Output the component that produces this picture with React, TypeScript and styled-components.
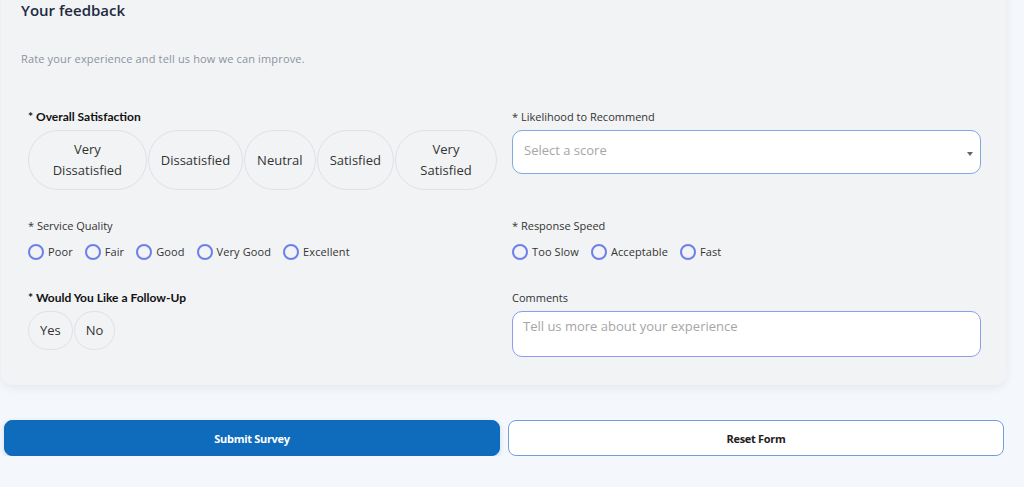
import React from 'react';
import styled, { createGlobalStyle } from 'styled-components';

const GlobalStyle = createGlobalStyle`
  html, body {
    margin: 0;
    padding: 0;
    background: #f4f7fb;
    font-family: 'Open Sans', 'Noto Sans', sans-serif;
    overflow: hidden;
  }
  * {
    box-sizing: border-box;
  }
`;

const satisfactionOptions = ['Very Dissatisfied', 'Dissatisfied', 'Neutral', 'Satisfied', 'Very Satisfied'];
const qualityOptions = ['Poor', 'Fair', 'Good', 'Very Good', 'Excellent'];
const speedOptions = ['Too Slow', 'Acceptable', 'Fast'];

export default function App() {
  return (
    <>
      <GlobalStyle />
      <Page>
        <Card>
          <Title>Your feedback</Title>
          <Subtitle>Rate your experience and tell us how we can improve.</Subtitle>
          <Fields>
            <Field>
              <StrongLabel>* Overall Satisfaction</StrongLabel>
              <PillGroup>
                {satisfactionOptions.map((opt) => (
                  <Pill key={opt} type="button">
                    {opt}
                  </Pill>
                ))}
              </PillGroup>
            </Field>
            <Field>
              <Label>* Likelihood to Recommend</Label>
              <SelectBox>
                <Placeholder>Select a score</Placeholder>
                <Caret />
              </SelectBox>
            </Field>

            <Field>
              <Label>* Service Quality</Label>
              <RadioRow>
                {qualityOptions.map((opt) => (
                  <RadioItem key={opt}>
                    <RadioInput type="radio" name="quality" />
                    {opt}
                  </RadioItem>
                ))}
              </RadioRow>
            </Field>
            <Field>
              <Label>* Response Speed</Label>
              <RadioRow>
                {speedOptions.map((opt) => (
                  <RadioItem key={opt}>
                    <RadioInput type="radio" name="speed" />
                    {opt}
                  </RadioItem>
                ))}
              </RadioRow>
            </Field>

            <Field>
              <StrongLabel>* Would You Like a Follow-Up</StrongLabel>
              <PillGroup>
                <Pill type="button" $compact>
                  Yes
                </Pill>
                <Pill type="button" $compact>
                  No
                </Pill>
              </PillGroup>
            </Field>
            <Field>
              <Label>Comments</Label>
              <TextArea placeholder="Tell us more about your experience" />
            </Field>
          </Fields>
        </Card>
        <Actions>
          <ActionButton type="button" $primary>
            Submit Survey
          </ActionButton>
          <ActionButton type="button">Reset Form</ActionButton>
        </Actions>
      </Page>
    </>
  );
}

const Page = styled.div`
  width: 1000px;
  margin-left: 4px;
`;

const Card = styled.div`
  margin: -18px -2px 0 -3px;
  padding: 18px 25px 28px 16px;
  background: #f2f3f5;
  border-radius: 12px;
  box-shadow: 0 3px 10px rgba(30, 50, 90, 0.07);
`;

const Title = styled.h2`
  margin: 0 0 0 4px;
  font-size: 15px;
  font-weight: 600;
  line-height: 20px;
  color: #1d2a3f;
`;

const Subtitle = styled.p`
  margin: 31px 0 0 4px;
  font-size: 11px;
  line-height: 16px;
  letter-spacing: 0.15px;
  color: #8b93a1;
`;

const Fields = styled.div`
  display: grid;
  grid-template-columns: 1fr 1fr;
  column-gap: 15px;
  row-gap: 28px;
  margin: 42px 0 0 11px;
`;

const Field = styled.div`
  display: flex;
  flex-direction: column;
  min-width: 0;
`;

const StrongLabel = styled.div`
  font-family: 'Lato', sans-serif;
  font-size: 12px;
  font-weight: 700;
  line-height: 15px;
  color: #111;
  margin-bottom: 6px;
`;

const Label = styled.div`
  font-size: 11px;
  line-height: 15px;
  color: #333;
  margin-bottom: 6px;
`;

const PillGroup = styled.div`
  display: flex;
  gap: 1px;
`;

const Pill = styled.button<{ $compact?: boolean }>`
  flex: 0 1 auto;
  padding: ${(p) => (p.$compact ? '8px 11px' : '8px 12px')};
  min-height: ${(p) => (p.$compact ? '37px' : '59px')};
  border: 1px solid #dde1e8;
  border-radius: 30px;
  background: transparent;
  font-family: 'Open Sans', sans-serif;
  font-size: 13px;
  line-height: 21px;
  color: #333;
  text-align: center;
  cursor: pointer;
`;

const SelectBox = styled.div`
  position: relative;
  height: 44px;
  background: #fff;
  border: 1px solid #7fa9e2;
  border-radius: 10px;
  padding: 7px 11px;
`;

const Placeholder = styled.span`
  font-size: 13px;
  line-height: 18px;
  color: #a6a6a6;
`;

const Caret = styled.span`
  position: absolute;
  right: 7px;
  top: 21px;
  border-left: 3.5px solid transparent;
  border-right: 3.5px solid transparent;
  border-top: 4px solid #666;
`;

const RadioRow = styled.div`
  display: flex;
  align-items: center;
  gap: 12px;
  margin: 5px 0 2px;
`;

const RadioItem = styled.label`
  display: flex;
  align-items: center;
  gap: 4px;
  font-size: 11px;
  line-height: 16px;
  letter-spacing: 0.1px;
  color: #333;
`;

const RadioInput = styled.input`
  appearance: none;
  margin: 0;
  width: 16px;
  height: 16px;
  border: 2px solid #6d80ea;
  border-radius: 50%;
  background: transparent;
`;

const TextArea = styled.textarea`
  height: 46px;
  resize: none;
  background: #fff;
  border: 1px solid #8e9cef;
  border-radius: 10px;
  padding: 5px 10px;
  font-family: 'Open Sans', sans-serif;
  font-size: 13px;
  line-height: 18px;
  color: #333;
  outline: none;

  &::placeholder {
    color: #a6a6a6;
  }
`;

const Actions = styled.div`
  display: flex;
  gap: 8px;
  margin-top: 35px;
`;

const ActionButton = styled.button<{ $primary?: boolean }>`
  flex: 1;
  height: 36px;
  border-radius: 8px;
  border: 1px solid ${(p) => (p.$primary ? '#0f6cbd' : '#6fa0dc')};
  background: ${(p) => (p.$primary ? '#0f6cbd' : '#fff')};
  color: ${(p) => (p.$primary ? '#fff' : '#222')};
  box-shadow: ${(p) => (p.$primary ? '0 2px 5px rgba(15, 108, 189, 0.2)' : 'none')};
  font-family: 'Open Sans', sans-serif;
  font-size: 11px;
  font-weight: 700;
  letter-spacing: -0.3px;
  cursor: pointer;
`;
